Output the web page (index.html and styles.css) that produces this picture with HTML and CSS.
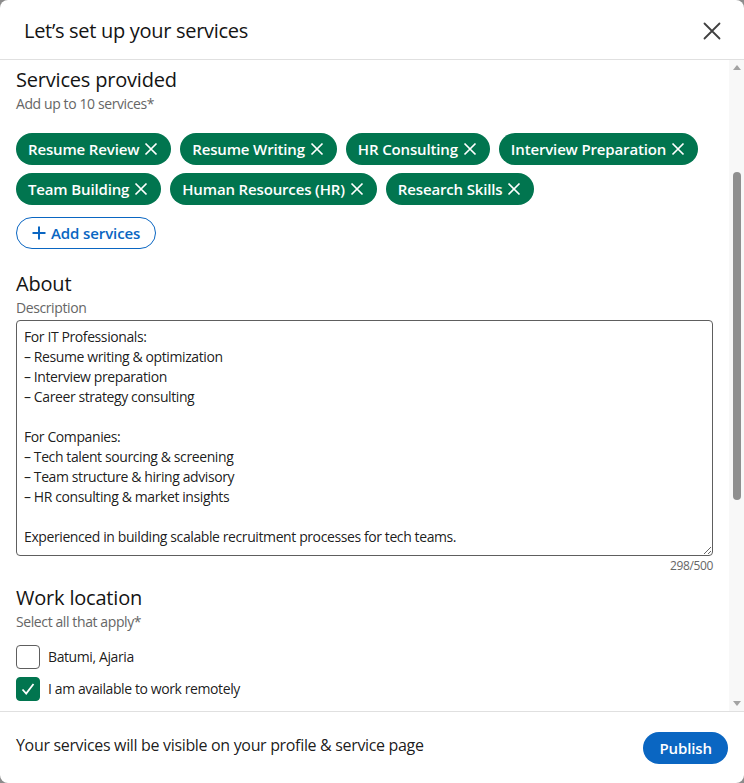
FILE: index.html
```html
<!DOCTYPE html>
<html lang="en">
<head>
<meta charset="utf-8">
<title>Let’s set up your services</title>
<link rel="stylesheet" href="styles.css">
</head>
<body>
<div class="modal">
  <header class="modal-header">
    <h1 class="modal-title">Let’s set up your services</h1>
    <button class="close-btn" aria-label="Dismiss">
      <svg width="24" height="24" viewBox="0 0 24 24"><path d="M4.5 4.5 L19.5 19.5 M19.5 4.5 L4.5 19.5" stroke="#404040" stroke-width="1.8" fill="none" stroke-linecap="round"/></svg>
    </button>
  </header>
  <div class="modal-body">
    <div class="content">
      <section class="section">
        <h2 class="section-title">Services provided</h2>
        <p class="hint">Add up to 10 services*</p>
        <ul class="chips">
          <li class="chip">Resume Review <svg class="chip-x" width="16" height="16" viewBox="0 0 16 16"><path d="M2.5 2.5 L13.5 13.5 M13.5 2.5 L2.5 13.5" stroke="#fff" stroke-width="1.7" fill="none"/></svg></li>
          <li class="chip">Resume Writing <svg class="chip-x" width="16" height="16" viewBox="0 0 16 16"><path d="M2.5 2.5 L13.5 13.5 M13.5 2.5 L2.5 13.5" stroke="#fff" stroke-width="1.7" fill="none"/></svg></li>
          <li class="chip">HR Consulting <svg class="chip-x" width="16" height="16" viewBox="0 0 16 16"><path d="M2.5 2.5 L13.5 13.5 M13.5 2.5 L2.5 13.5" stroke="#fff" stroke-width="1.7" fill="none"/></svg></li>
          <li class="chip">Interview Preparation <svg class="chip-x" width="16" height="16" viewBox="0 0 16 16"><path d="M2.5 2.5 L13.5 13.5 M13.5 2.5 L2.5 13.5" stroke="#fff" stroke-width="1.7" fill="none"/></svg></li>
          <li class="chip">Team Building <svg class="chip-x" width="16" height="16" viewBox="0 0 16 16"><path d="M2.5 2.5 L13.5 13.5 M13.5 2.5 L2.5 13.5" stroke="#fff" stroke-width="1.7" fill="none"/></svg></li>
          <li class="chip">Human Resources (HR) <svg class="chip-x" width="16" height="16" viewBox="0 0 16 16"><path d="M2.5 2.5 L13.5 13.5 M13.5 2.5 L2.5 13.5" stroke="#fff" stroke-width="1.7" fill="none"/></svg></li>
          <li class="chip">Research Skills <svg class="chip-x" width="16" height="16" viewBox="0 0 16 16"><path d="M2.5 2.5 L13.5 13.5 M13.5 2.5 L2.5 13.5" stroke="#fff" stroke-width="1.7" fill="none"/></svg></li>
        </ul>
        <button class="add-btn"><svg width="16" height="16" viewBox="0 0 16 16"><path d="M8 1.5 V14.5 M1.5 8 H14.5" stroke="#0a66c2" stroke-width="2" fill="none"/></svg>Add services</button>
      </section>
      <section class="section about">
        <h2 class="section-title">About</h2>
        <label class="hint" for="desc">Description</label>
        <textarea id="desc" class="desc" readonly>For IT Professionals:
– Resume writing &amp; optimization
– Interview preparation
– Career strategy consulting

For Companies:
– Tech talent sourcing &amp; screening
– Team structure &amp; hiring advisory
– HR consulting &amp; market insights

Experienced in building scalable recruitment processes for tech teams.</textarea>
        <div class="counter">298/500</div>
      </section>
      <section class="section work">
        <h2 class="section-title">Work location</h2>
        <p class="hint">Select all that apply*</p>
        <div class="checks">
          <div class="check-row"><span class="box"></span><span class="check-label">Batumi, Ajaria</span></div>
          <div class="check-row"><span class="box checked"><svg width="24" height="24" viewBox="0 0 24 24"><path d="M6.5 12.5 L10.2 16.5 L17.5 7" stroke="#fff" stroke-width="1.8" fill="none"/></svg></span><span class="check-label">I am available to work remotely</span></div>
        </div>
      </section>
    </div>
    <div class="scrollbar">
      <span class="arrow up"></span>
      <div class="track"><span class="thumb"></span></div>
      <span class="arrow down"></span>
    </div>
  </div>
  <footer class="modal-footer">
    <p class="footer-text">Your services will be visible on your profile &amp; service page</p>
    <button class="publish">Publish</button>
  </footer>
</div>
</body>
</html>
```
FILE: styles.css
```css
* { box-sizing: border-box; }
html, body { margin: 0; height: 100%; }
body {
  background: #8c8c8c;
  font-family: "Open Sans", "Noto Sans", sans-serif;
  color: rgba(0,0,0,0.9);
  letter-spacing: -0.35px;
}
.modal {
  width: 744px;
  height: 783px;
  background: #fff;
  border-radius: 8px;
  overflow: hidden;
  display: flex;
  flex-direction: column;
}
.modal-header {
  height: 60px;
  flex: none;
  display: flex;
  align-items: center;
  justify-content: space-between;
  padding: 0 20px 0 24px;
  border-bottom: 1px solid #e0e0e0;
}
.modal-title {
  margin: 0;
  font-size: 20px;
  font-weight: 400;
  line-height: 28px;
  color: #141414;
  letter-spacing: -0.3px;
  padding-top: 2px;
}
.close-btn {
  border: 0;
  background: none;
  padding: 0;
  width: 24px;
  height: 24px;
  display: flex;
  margin-top: 2px;
}
.modal-body {
  flex: 1;
  display: flex;
  min-height: 0;
}
.content {
  flex: 1;
  padding: 6px 16px 0 16px;
  overflow: hidden;
}
.section-title {
  margin: 0;
  font-size: 20px;
  font-weight: 500;
  line-height: 28px;
  color: #141414;
  letter-spacing: -0.2px;
}
.hint {
  display: block;
  margin: 0;
  font-size: 14px;
  line-height: 20px;
  color: #666;
  letter-spacing: -0.4px;
}
.chips {
  list-style: none;
  margin: 19px 0 0;
  padding: 0;
  display: flex;
  flex-wrap: wrap;
  gap: 8px 9px;
}
.chip {
  height: 32px;
  border-radius: 16px;
  background: #01754f;
  color: #fff;
  font-size: 15px;
  font-weight: 650;
  letter-spacing: -0.15px;
  display: flex;
  align-items: center;
  gap: 4px;
  padding: 0 12px;
}
.chip-x { flex: none; }
.add-btn {
  margin-top: 12px;
  height: 32px;
  border: 1px solid #0a66c2;
  border-radius: 16px;
  background: #fff;
  color: #0a66c2;
  font-family: inherit;
  font-size: 15px;
  font-weight: 600;
  letter-spacing: -0.1px;
  display: inline-flex;
  align-items: center;
  gap: 4px;
  padding: 0 15px 0 14px;
}
.about { margin-top: 21px; }
.desc {
  display: block;
  width: 100%;
  height: 236px;
  margin-top: 2px;
  border: 1px solid #5e5e5e;
  border-radius: 4px;
  padding: 6px 7px;
  font-family: inherit;
  font-size: 14px;
  line-height: 20px;
  letter-spacing: -0.4px;
  color: rgba(0,0,0,0.9);
  resize: vertical;
  outline: none;
}
.counter {
  text-align: right;
  font-size: 12px;
  line-height: 16px;
  color: #666;
  margin-top: 2px;
}
.work { margin-top: 10px; }
.checks {
  margin-top: 13px;
  display: flex;
  flex-direction: column;
  gap: 8px;
}
.check-row {
  display: flex;
  align-items: center;
  gap: 8px;
  height: 24px;
}
.box {
  width: 24px;
  height: 24px;
  border: 1px solid #5e5e5e;
  border-radius: 4px;
  display: flex;
}
.box.checked {
  background: #01754f;
  border-color: #01754f;
}
.box.checked svg { margin: -1px; }
.check-label {
  font-size: 14px;
  line-height: 20px;
  letter-spacing: -0.4px;
  color: rgba(0,0,0,0.9);
}
.scrollbar {
  width: 15px;
  flex: none;
  background: #f8f8f8;
  display: flex;
  flex-direction: column;
  align-items: center;
  padding: 5px 0 5px;
}
.arrow {
  width: 0;
  height: 0;
  border-left: 4px solid transparent;
  border-right: 4px solid transparent;
  flex: none;
}
.arrow.up { border-bottom: 5px solid #a3a3a3; }
.arrow.down { border-top: 5px solid #a3a3a3; }
.track {
  flex: 1;
  width: 100%;
  display: flex;
  justify-content: center;
  padding-top: 102px;
}
.thumb {
  width: 8px;
  height: 328px;
  background: #8f8f8f;
  border-radius: 4px;
}
.modal-footer {
  flex: none;
  height: 72px;
  border-top: 1px solid #e0e0e0;
  display: flex;
  align-items: center;
  justify-content: space-between;
  padding: 0 16px;
}
.footer-text {
  margin: 0;
  font-size: 16px;
  line-height: 24px;
  letter-spacing: -0.33px;
  color: rgba(0,0,0,0.9);
  margin-top: -5px;
}
.publish {
  height: 32px;
  border: 0;
  border-radius: 16px;
  background: #0a66c2;
  color: #fff;
  font-family: inherit;
  font-size: 15px;
  font-weight: 650;
  letter-spacing: -0.1px;
  padding: 0 16px;
}
```
